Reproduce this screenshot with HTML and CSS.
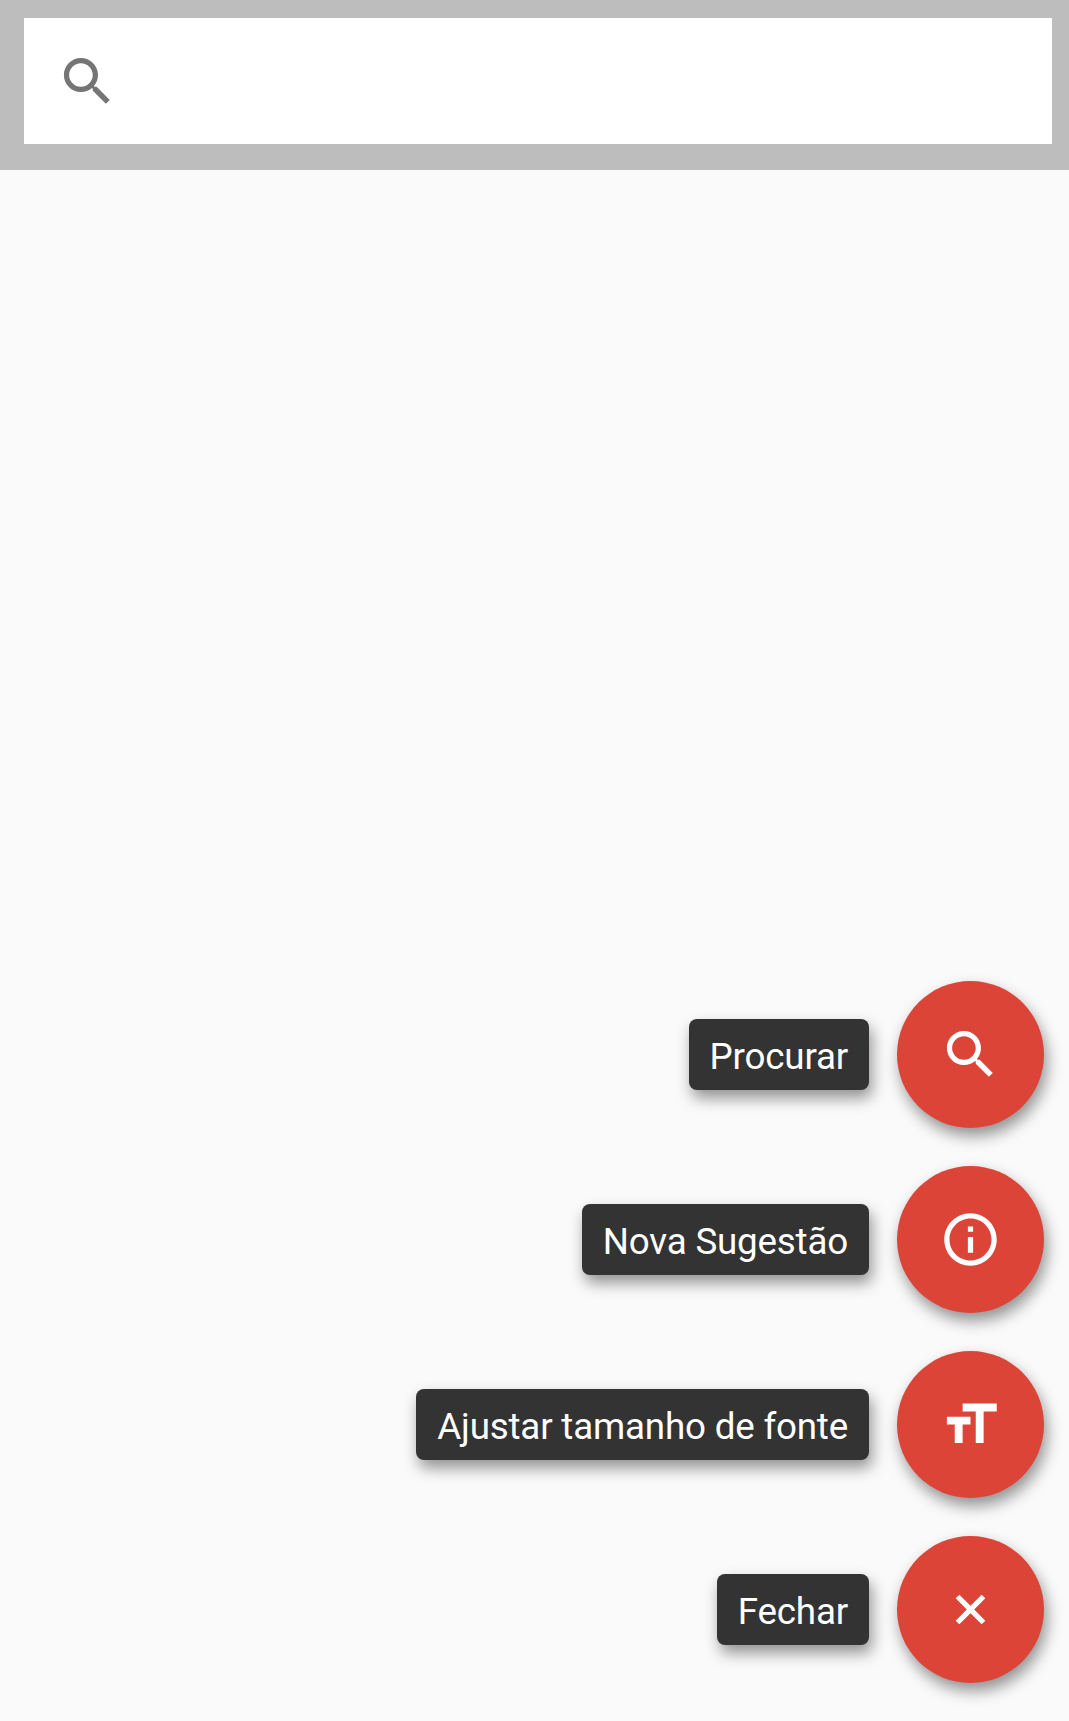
FILE: index.html
```html
<!DOCTYPE html>
<html lang="pt">
<head>
<meta charset="utf-8">
<title>Procurar</title>
<link rel="stylesheet" href="styles.css">
</head>
<body>
<header class="toolbar">
  <div class="search-box">
    <svg class="icon" viewBox="0 0 24 24"><path d="M15.5 14h-.79l-.28-.27C15.41 12.59 16 11.11 16 9.5 16 5.91 13.09 3 9.5 3S3 5.91 3 9.5 5.91 16 9.5 16c1.61 0 3.09-.59 4.23-1.57l.27.28v.79l5 4.99L20.49 19l-4.99-5zm-6 0C7.01 14 5 11.99 5 9.5S7.01 5 9.5 5 14 7.01 14 9.5 11.99 14 9.5 14z"/></svg>
  </div>
</header>
<main class="actions">
  <div class="action">
    <span class="label">Procurar</span>
    <button class="fab" aria-label="Procurar"><svg class="icon" viewBox="0 0 24 24"><path d="M15.5 14h-.79l-.28-.27C15.41 12.59 16 11.11 16 9.5 16 5.91 13.09 3 9.5 3S3 5.91 3 9.5 5.91 16 9.5 16c1.61 0 3.09-.59 4.23-1.57l.27.28v.79l5 4.99L20.49 19l-4.99-5zm-6 0C7.01 14 5 11.99 5 9.5S7.01 5 9.5 5 14 7.01 14 9.5 11.99 14 9.5 14z"/></svg></button>
  </div>
  <div class="action">
    <span class="label">Nova Sugestão</span>
    <button class="fab" aria-label="Nova Sugestão"><svg class="icon" viewBox="0 0 24 24"><path d="M11 17h2v-6h-2v6zm1-15C6.48 2 2 6.48 2 12s4.48 10 10 10 10-4.48 10-10S17.52 2 12 2zm0 18c-4.41 0-8-3.59-8-8s3.59-8 8-8 8 3.59 8 8-3.59 8-8 8zM11 9h2V7h-2v2z"/></svg></button>
  </div>
  <div class="action">
    <span class="label">Ajustar tamanho de fonte</span>
    <button class="fab" aria-label="Ajustar tamanho de fonte"><svg class="icon" viewBox="0 0 24 24"><path d="M9 4v3h5v12h3V7h5V4H9zm-6 8h3v7h3v-7h3V9H3v3z"/></svg></button>
  </div>
  <div class="action">
    <span class="label">Fechar</span>
    <button class="fab" aria-label="Fechar"><svg class="icon" viewBox="0 0 24 24"><path transform="rotate(45 12 12)" d="M19 13h-6v6h-2v-6H5v-2h6V5h2v6h6v2z"/></svg></button>
  </div>
</main>
</body>
</html>
```
FILE: styles.css
```css
* {
  box-sizing: border-box;
}

body {
  margin: 0;
  height: 1721px;
  display: flex;
  flex-direction: column;
  background: #fafafa;
  font-family: Roboto, sans-serif;
  overflow: hidden;
}

.toolbar {
  height: 170px;
  padding: 18px 17px 26px 24px;
  background: #bdbdbd;
}

.search-box {
  height: 126px;
  padding-left: 32px;
  display: flex;
  align-items: center;
  background: #fff;
  color: #757575;
}

.icon {
  display: block;
  width: 63px;
  height: 63px;
  fill: currentColor;
}

.actions {
  flex: 1;
  padding: 0 25px 38px 0;
  display: flex;
  flex-direction: column;
  justify-content: flex-end;
  gap: 38px;
}

.action {
  display: flex;
  justify-content: flex-end;
  align-items: center;
  gap: 28px;
}

.label {
  height: 71px;
  padding: 2px 21px 0;
  border-radius: 8px;
  background: #333;
  color: #fff;
  font-size: 36.75px;
  letter-spacing: -0.19px;
  line-height: 71px;
  white-space: nowrap;
  box-shadow: 3px 8px 15px rgba(0, 0, 0, 0.42);
}

.fab {
  width: 147px;
  height: 147px;
  padding: 0;
  border: 0;
  border-radius: 50%;
  display: flex;
  align-items: center;
  justify-content: center;
  background: #db4437;
  color: #fff;
  box-shadow: 3px 8px 15px rgba(0, 0, 0, 0.42);
}
```
